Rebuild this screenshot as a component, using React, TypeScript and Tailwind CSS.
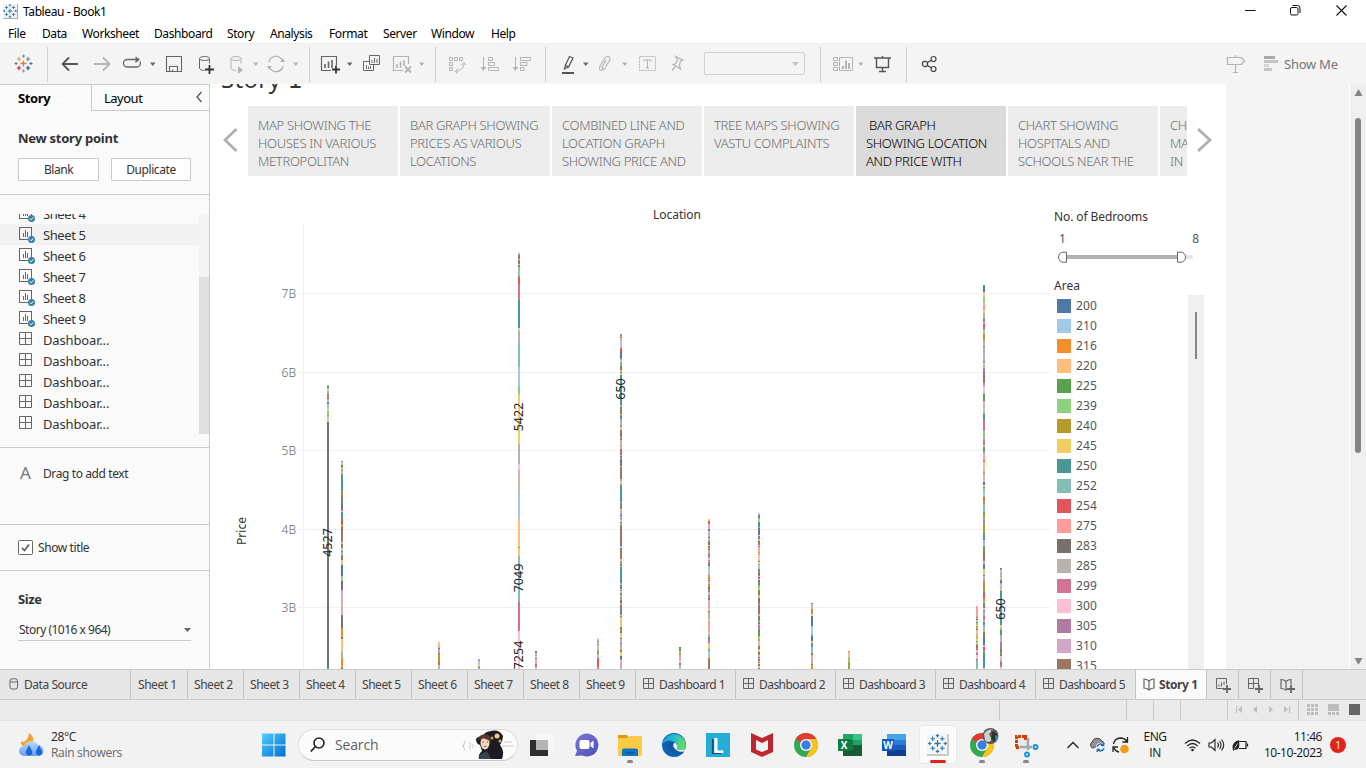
import React from "react";

const PALETTE: Record<string, string> = {
  A: "#4e79a7", B: "#a0cbe8", C: "#f28e2b", D: "#ffbe7d", E: "#59a14f",
  F: "#8cd17d", G: "#b6992d", H: "#f1ce63", I: "#499894", J: "#86bcb6",
  K: "#e15759", L: "#ff9d9a", M: "#79706e", N: "#bab0ac", O: "#d37295",
  P: "#fabfd2", Q: "#b07aa1", R: "#d4a6c8", S: "#9d7660", T: "#d7b5a6",
};

// Stacked bars: x, top, then colour/height pairs from the top down.
const BARS: [number, number, string][] = [
  [327, 385, "T1E2N1B3N1C2E1O2M1T3I2B5H2F4G1B2D4M244E1A1E1"],
  [341, 461, "O1B1D2M2F3G1L1T2I17G1S1G2S6I3M5K2P1I6K4M2C3M2S13T2S4B3S1J2P1S5D4F1A11F5M9R12T10L3I2M11C9A1S1D13N6C10I1"],
  [438, 642, "D4L2K1J3L1K1G1G8K2T2N2"],
  [478, 659, "N1O1B3H2T1S1N1"],
  [518, 253, "N2S4D1S4D1I2F4N1F4Q2K6O15C1I28P2T1F2N9J25B19F8H50N20P6T23B26D28G1H8J46O29P38"],
  [535, 651, "S1K1F1J2P2A1P1L4Q3T2"],
  [597, 638, "P2R1G1T2Q1B5F1G2S1B4K9N1O1"],
  [620, 334, "Q2N1K1D1N2P1B4L2G1K3A6E1T4E1J2S4T2E1H2I30N2S7D1I4N6Q2D3I1S5I1N1S2N6C1D1T1E1K2S3N1I1S1N1M4S1M2H1S12T1N1B1D2J1S2I15N1S6D1N4Q3P1S1B2D1I1F1N1O1S18I1M1N1P1S11D2N1E1J1S2F1I16N2S2A2D1I1P2I2N3S1J1E1M2N2S5I3A1O1P1K1R1D1H8I1S1K1C1I2D5I1N4S1N6S2H4A3O1P1R9"],
  [679, 647, "A1E3R2G2L3T3P2S1K1P1N1B2"],
  [708, 519, "H2K3R2T3A1I1L3T3A1B2C2A3H1S2C1M1N3Q3K1T2P1Q1R1S4B9C3E1T1K1N3G3M2Q2E1R1T2Q2R1A1I1T1L4T1R2D3A1N7D2L9T2D2N3I2O4R1H4F2I1B2T1B2H1N1G1S10I2"],
  [758, 513, "T1P1A1I2J1T1F1H1I5F1M1E1M5P1I1O1K1P1N1E2K2P1K1T5C1H1C1P4D1L1G1P2C1D1B3I2O2M2G1L1K2P1A2O1E2C1F3H1E2S3H1F1D1K1M2S3J1S8K1N1L1S3I2T1S2L1O5I1E5F2H1C2T1P1R3E2M1D1H2A2C1T2S1L1S2P1S1P1S2D2I1"],
  [811, 603, "E1R5G5P2A10B8J2A5D2I4J6S2L5N4S1C4"],
  [848, 651, "Q1D5F5G7"],
  [976, 606, "L11S1P1A1H2I1F2D1G1C1R1A1H3T4C1H3I1D1F2K3O1S1P2J1O2P4K1J12"],
  [983, 285, "E1A6D5F6T1L4O1H3T1N5C1I2T1K1P1K3Q3P1F3G6N5D1I1N14A1B4C1D1Q4S3I1K3S4N1J1O1P7T1E7T7D1B4C1I5O12B1F6T1Q6B1D1E5J1L7S1C1D9J2S1D1T7A3D2E1J3B5C1Q1S2G4J8E1G5J2Q2S1F1G9I7B2O1B3E2S13T3A5D6I1N5S1C1G8I1S1K3S2C4N1I3K2P2Q2R1L1J2O4T1N1I3J3N4S6A7R1P1K3O1C1I2E1I12S1D6"],
  [1000, 568, "M1J2P1N5D1R2O1A2J1T4N1D1N1I34D2H1F2I5N7Q7S4G1E1I1P2L1H1N2S1E1Q3P2S1D6"],
];

function segments(top: number, spec: string) {
  let y = top;
  return Array.from(spec.matchAll(/([A-T])(\d+)/g)).map((m) => {
    const h = Number(m[2]);
    const seg = { y, h: Math.max(0, Math.min(h, 669 - y)), fill: PALETTE[m[1]] };
    y += h;
    return seg;
  });
}

const GRID: [string, number][] = [["7B", 293], ["6B", 372], ["5B", 450], ["4B", 529], ["3B", 607]];
const MARKS: [string, number, number][] = [
  ["4527", 326.5, 542.5], ["5422", 517.5, 417], ["7049", 517.5, 578],
  ["7254", 517.5, 655], ["650", 619.5, 389], ["650", 999.5, 609],
];

function Chart() {
  return (
    <svg width="840" height="493" viewBox="210 176 840 493" className="block shrink-0 font-['Noto_Sans',sans-serif]" shapeRendering="crispEdges">
      <text x="677" y="219" textAnchor="middle" fontSize="12" fill="#333" textLength="48">Location</text>
      <text transform="translate(246 531) rotate(-90)" textAnchor="middle" fontSize="12" fill="#333" textLength="28">Price</text>
      <path d="M303.5 224V669" stroke="#f0f0f0" />
      {GRID.map(([label, y]) => (
        <g key={label}>
          <path d={`M298 ${y + 0.5}H1050`} stroke="#f0f0f0" />
          <text x="296" y={y + 5} textAnchor="end" fontSize="12" fill="#666" fontWeight="300">{label}</text>
        </g>
      ))}
      {BARS.map(([x, top, spec]) =>
        segments(top, spec).map((s, i) => <rect key={`${x}-${i}`} x={x} y={s.y} width="2" height={s.h} fill={s.fill} />)
      )}
      {MARKS.map(([t, x, y], i) => (
        <text key={i} transform={`translate(${x + 5} ${y}) rotate(-90)`} textAnchor="middle" fontSize="12.5" fill="#222">{t}</text>
      ))}
    </svg>
  );
}

type IcoProps = { w: number; h?: number; className?: string; children: React.ReactNode; c?: string };
function Ico({ w, h = 20, className = "", children, c = "#666" }: IcoProps) {
  return (
    <svg width={w} height={h} viewBox={`0 0 ${w} ${h}`} fill="none" stroke={c} className={`block shrink-0 overflow-visible ${className}`}>
      {children}
    </svg>
  );
}
function Caret({ className, c = "#666" }: { className: string; c?: string }) {
  return <Ico w={6} className={className} c={c}><path d="M0 8.500h5.500l-2.750 3.500z" fill={c} stroke="none" /></Ico>;
}
function Sep({ className }: { className: string }) {
  return <div className={`-mt-[7px] h-[35px] w-px shrink-0 bg-[#cfcfcf] ${className}`} />;
}

function TableauMark({ mono = false }: { mono?: boolean }) {
  const m = "#2d78a8";
  const p = (x: number, y: number, r: number) => `M${x - r} ${y}h${2 * r}M${x} ${y - r}v${2 * r}`;
  const k = (c: string) => (mono ? m : c);
  return (
    <g fill="none" strokeWidth="1.1">
      <path d={p(9, 9, 3)} stroke={k("#e8762d")} strokeWidth="1.3" />
      <path d={p(4.5, 4.5, 2.2)} stroke={k("#eb9c3c")} />
      <path d={p(13.5, 4.5, 2.2)} stroke={k("#5b879b")} />
      <path d={p(4.5, 13.5, 2.2)} stroke={k("#c72035")} />
      <path d={p(13.5, 13.5, 2.2)} stroke={k("#1f447e")} />
      <path d={p(9, 1.6, 1.6)} stroke={k("#7099a6")} />
      <path d={p(9, 16.4, 1.6)} stroke={k("#8a9cc4")} />
      <path d={p(1.6, 9, 1.6)} stroke={k("#59879b")} />
      <path d={p(16.4, 9, 1.6)} stroke={k("#5b6591")} />
    </g>
  );
}

function TitleBar() {
  return (
    <div className="flex h-[22px] shrink-0 items-center">
      <div className="ml-[3px] flex h-[15px] w-[15px] items-center justify-center border-r border-b border-[#aaa] bg-[#f4f4f4]">
        <svg width="14" height="14" viewBox="0 0 18 18"><TableauMark mono /></svg>
      </div>
      <span className="ml-[5px] pt-px text-[12px] leading-[22px] tracking-[-0.4px] text-black">Tableau - Book1</span>
      <div className="ml-auto flex items-center">
        <Ico w={11} h={20} c="#111" className="mr-[34px]"><path d="M0 9.500h10.500" /></Ico>
        <Ico w={11} h={20} c="#111" className="mr-[35px]">
          <rect x=".5" y="6.500" width="7.500" height="7.500" rx="1.500" /><path d="M2.500 4.500h5q2.500 0 2.500 2.500v5" />
        </Ico>
        <Ico w={11} h={20} c="#111" className="mr-[19px]"><path d="M.5 4.500l10 10M10.500 4.500l-10 10" strokeWidth="1.100" /></Ico>
      </div>
    </div>
  );
}

function MenuBar() {
  const items: [string, string][] = [
    ["File", "w-[34px]"], ["Data", "w-[40px]"], ["Worksheet", "w-[72px]"], ["Dashboard", "w-[73px]"],
    ["Story", "w-[43px]"], ["Analysis", "w-[59px]"], ["Format", "w-[54px]"], ["Server", "w-[48px]"],
    ["Window", "w-[60px]"], ["Help", "w-[40px]"],
  ];
  return (
    <div className="flex h-[21px] shrink-0 items-center pt-[3px] pl-[8px] text-[12px] tracking-[-0.4px] text-black">
      {items.map(([t, w]) => <span key={t} className={`shrink-0 ${w}`}>{t}</span>)}
    </div>
  );
}

function Toolbar() {
  const g = "#b4b4b4";
  return (
    <div className="flex h-[41px] shrink-0 items-start border-t border-[#ececec] bg-[#f4f4f4] pt-[10px]">
      <Ico w={18} className="ml-[15px]"><g transform="translate(-.5 .5)"><TableauMark /></g></Ico>
      <Sep className="ml-[14px]" />
      <Ico w={18} className="ml-[13px]" c="#555"><path d="M17 10H2M8 3.500L1.500 10 8 16.500" strokeWidth="1.800" /></Ico>
      <Ico w={18} className="ml-[14px]" c={g}><path d="M1 10h15M10 3.500l6.500 6.500-6.500 6.500" strokeWidth="1.800" /></Ico>
      <Ico w={19} className="ml-[12px]"><path d="M15 5.500H4.500a4 3.700 0 0 0 0 7.500h9.500a4 3.700 0 0 0 3-5.500" strokeWidth="1.300" /><path d="M12.500 2.500l4.500 3-4.500 3.500z" fill="#666" stroke="none" /></Ico>
      <Caret className="ml-[8px]" />
      <Ico w={16} className="ml-[10px]"><path d="M.5 2.500h15v15H.5zM3.500 17.500v-5h8v5M6.500 17.500v-2" strokeWidth="1.100" /></Ico>
      <Ico w={16} className="ml-[16px]">
        <ellipse cx="6.500" cy="4.500" rx="5" ry="2" /><path d="M1.500 4.500v10q1 2 5 2M11.500 4.500v5" /><path d="M11.500 11v9M7 15.500h9" stroke="#333" strokeWidth="1.800" />
      </Ico>
      <Ico w={14} className="ml-[16px]" c={g}>
        <ellipse cx="6" cy="4.500" rx="5" ry="2" /><path d="M1 4.500v10q1 2 5 2M11 4.500v5" /><path d="M8 12l5 4-5 4z" fill={g} stroke="none" />
      </Ico>
      <Caret className="ml-[9px]" c={g} />
      <Ico w={18} className="ml-[8px]" c={g}><path d="M2 8a7 7 0 0 1 13-2M16 12a7 7 0 0 1-13 2" strokeWidth="1.300" /><path d="M13 8h5l-2-4zM0 12h5l-3 4z" fill={g} stroke="none" /></Ico>
      <Caret className="ml-[8px]" c={g} />
      <Sep className="ml-[10px]" />
      <Ico w={22} className="ml-[10px]">
        <path d="M11 16.500H1.500v-14h15V11" strokeWidth="1.200" /><path d="M5 14v-4M8.500 14V7.500M12 14V6" strokeWidth="1.600" /><path d="M16 11.500v8M12 15.500h8" stroke="#333" strokeWidth="1.800" />
      </Ico>
      <Caret className="ml-[5px]" />
      <Ico w={18} className="ml-[10px]"><path d="M6.500 1.500h10v9h-10zM6 7.500H.5v9h10V11M9 9V6M11.500 9V4M14 9V5M3.500 15v-4M5.500 15v-2.500M7.500 15v-3" /></Ico>
      <Ico w={22} className="ml-[11px]" c={g}>
        <path d="M11 16.500H1.500v-14h15V10" strokeWidth="1.200" /><path d="M5 14v-4M8.500 14V7.500M12 12V6" strokeWidth="1.600" /><path d="M13 12.500l6 6M19 12.500l-6 6" strokeWidth="1.800" />
      </Ico>
      <Caret className="ml-[5px]" c={g} />
      <Sep className="ml-[10px]" />
      <Ico w={20} className="ml-[12px]" c={g}>
        <path d="M1.500 3.500h3v3h-3zM6.500 3.500h3v3h-3zM11.500 3.500h3v3h-3zM1.500 8.500h3v3h-3zM1.500 13.500h3v3h-3zM16 9.500q0 6-8 8" strokeWidth="1" /><path d="M13 11.500l3-3 2 2.500M10 14.500l-3 3 3 2" />
      </Ico>
      <Ico w={20} className="ml-[12px]" c={g}>
        <path d="M3.500 3v13M8.500 3.500h4v3h-4zM8.500 8.500h6v3h-6zM8.500 13.500h10v3h-10z" /><path d="M.5 13h6l-3 4z" fill={g} stroke="none" />
      </Ico>
      <Ico w={20} className="ml-[12px]" c={g}>
        <path d="M3.500 3v13M8.500 3.500h10v3h-10zM8.500 8.500h6.500v3H8.500zM8.500 13.500h3.500v3H8.500z" /><path d="M.5 13h6l-3 4z" fill={g} stroke="none" />
      </Ico>
      <Sep className="ml-[13px]" />
      <Ico w={15} className="ml-[15px]"><path d="M1 19h12" strokeWidth="2" stroke="#555" /><path d="M4.500 11L8.500 2.500l3.500 1.500-4.500 9zM4.500 11l-1 4 4-2" strokeWidth="1.200" stroke="#555" /></Ico>
      <Caret className="ml-[7px]" />
      <Ico w={14} className="ml-[9px]" c={g}><path d="M8 6l-4 7q0 2.500 2.500 1.500l5-8q1.500-4-2-4-1.500 0-2.500 1.500l-5 8q-1.500 4 1.500 4.500 1.500 0 3-2" strokeWidth="1.200" /></Ico>
      <Caret className="ml-[10px]" c={g} />
      <Ico w={18} className="ml-[11px]" c={g}><rect x=".5" y="2.500" width="16" height="14" strokeDasharray="2 1" /><path d="M5 7.500V6h7v1.500M8.500 6v8M7 14h3" /></Ico>
      <Ico w={14} className="ml-[13px]" c={g}><path d="M5.500 2.500l7.500 3.500-2.500 1-1 4 1 4-3.500-2.500-4-2 3-1 1.500-4zM5.500 12.500L2 16.500" strokeWidth="1.200" /></Ico>
      <div className="mt-[-2px] ml-[20px] flex h-[23px] w-[101px] shrink-0 items-center justify-end rounded-[2px] border border-[#d0d0d0] pr-[5px]">
        <Ico w={7} h={4} c="none"><path d="M0 0h7L3.500 4z" fill="#c4c4c4" /></Ico>
      </div>
      <Sep className="ml-[15px]" />
      <Ico w={21} className="ml-[12px]" c={g}>
        <path d="M.5 3.500h4v3h-4zM.5 8.500h4v3h-4zM.5 13.500h4v3h-4zM6.500 3.500h13v13h-13z" /><path d="M10 15v-3M13 15V6.500M16 15V9" strokeWidth="2" />
      </Ico>
      <Caret className="ml-[4px]" c={g} />
      <Ico w={18} className="ml-[10px]" c="#555"><path d="M0 4h17M8.500 2v2M2.500 4v9.500h12V4M8.500 13.500v4M5 17.500h7" strokeWidth="1.400" /></Ico>
      <Sep className="ml-[14px]" />
      <Ico w={15} className="ml-[15px]" c="#444"><circle cx="3" cy="10" r="2.600" strokeWidth="1.200" /><circle cx="11.500" cy="5" r="2.500" strokeWidth="1.200" /><circle cx="11.500" cy="15" r="2.500" strokeWidth="1.200" /><path d="M5.500 8.500l3.500-2M5.500 11.500l3.500 2" strokeWidth="1.300" /></Ico>
      <Ico w={20} className="ml-[289px]" c={g}><path d="M1.500 3.500h14l3 3.500-3 3.500h-14zM9.500 1v2.500M9.500 10.500v8M7 18.500h5" strokeWidth="1.200" /></Ico>
      <Ico w={14} className="ml-[18px]" c={g}><path d="M0 3.500h11" strokeWidth="3" stroke="#a9a9a9" /><path d="M0 7.500h14M0 15.500h8" strokeWidth="3" stroke="#c4c4c4" /><path d="M0 11.500h5" strokeWidth="3" stroke="#d4d4d4" /></Ico>
      <span className="ml-[6px] text-[13px] leading-[21px] tracking-[-0.25px] whitespace-nowrap text-[#757575]">Show Me</span>
    </div>
  );
}

function SheetIcon() {
  return (
    <Ico w={17} h={17}>
      <rect x=".5" y=".5" width="12" height="12" /><path d="M4.500 10V6M6.500 10V3M8.500 10V5" />
      <circle cx="12.500" cy="12.500" r="3.500" fill="#3a7fa5" stroke="none" /><path d="M10.800 12.500l1.300 1.300 2.200-2.500" stroke="#fff" />
    </Ico>
  );
}
function GridIcon({ s = 13 }: { s?: number }) {
  const e = s - 0.5, m = Math.floor(s / 2) + 0.5;
  return <Ico w={s} h={s}><path d={`M.5 .5H${e}V${e}H.5zM${m} .5V${e}M.5 ${m}H${e}`} /></Ico>;
}

function Sidebar() {
  const rows = ["Sheet 4", "Sheet 5", "Sheet 6", "Sheet 7", "Sheet 8", "Sheet 9", "Dashboar...", "Dashboar...", "Dashboar...", "Dashboar...", "Dashboar..."];
  return (
    <aside className="flex h-[585px] w-[210px] shrink-0 flex-col border-t border-r border-[#cacaca] bg-[#fafafa] text-[#333]">
      <div className="flex h-[26px] shrink-0">
        <div className="w-[91px] shrink-0 pl-[18px] text-[13px] leading-[27px] font-bold tracking-[-0.4px] text-black">Story</div>
        <div className="flex flex-1 justify-between border-b border-l border-[#cacaca] pl-[12px] text-[13px] leading-[27px] tracking-[-0.5px] text-black">
          Layout
          <Ico w={7} h={12} className="mt-[6px] mr-[6px]" c="#555"><path d="M5.500 1L1 6l4.500 5" strokeWidth="1.300" /></Ico>
        </div>
      </div>
      <div className="flex h-[84px] shrink-0 flex-col border-b border-[#cacaca] px-[18px] pt-[17px]">
        <div className="text-[13px] leading-[20px] font-bold tracking-[-0.25px] whitespace-nowrap">New story point</div>
        <div className="mt-[10px] flex gap-[12px]">
          <div className="h-[23px] w-[81px] rounded-[1px] border border-[#c9c9c9] bg-white text-center text-[12px] leading-[22px] tracking-[-0.45px]">Blank</div>
          <div className="h-[23px] w-[80px] rounded-[1px] border border-[#c9c9c9] bg-white text-center text-[12px] leading-[22px] tracking-[-0.4px]">Duplicate</div>
        </div>
      </div>
      <div className="flex h-[253px] shrink-0 border-b border-[#cacaca] pt-[19px]">
        <div className="h-[220px] w-[199px] overflow-hidden">
          <div className="-mt-[11px]">
            {rows.map((r, i) => (
              <div key={i} className={`flex h-[21px] items-start pl-[19px] ${i === 1 ? "bg-[#f2f2f2]" : ""}`}>
                <div className="w-[24px] shrink-0 pt-[3px]">{i < 6 ? <SheetIcon /> : <GridIcon />}</div>
                <span className={`text-[13px] leading-[23px] ${i < 6 ? "tracking-[-0.4px]" : "tracking-[-0.15px]"}`}>{r}</span>
              </div>
            ))}
          </div>
        </div>
        <div className="h-[220px] w-[10px] bg-[#f4f4f4] pt-[63px]"><div className="h-[157px] bg-[#e0e0e0]" /></div>
      </div>
      <div className="flex h-[77px] shrink-0 border-b border-[#cacaca] pl-[20px] pt-[16px]">
        <span className="w-[23px] text-[17px] leading-[18px] text-[#777]">A</span>
        <span className="text-[12px] leading-[20px] tracking-[-0.4px]">Drag to add text</span>
      </div>
      <div className="flex h-[46px] shrink-0 items-center border-b border-[#cacaca] pl-[18px]">
        <Ico w={15} h={15}><rect x=".5" y=".5" width="14" height="14" rx="1" fill="#fff" /><path d="M4 8l2.500 2.500L11 4.500" strokeWidth="1.800" /></Ico>
        <span className="ml-[5px] text-[12px] tracking-[-0.4px]">Show title</span>
      </div>
      <div className="px-[18px] pt-[18px]">
        <div className="text-[13px] leading-[20px] font-bold tracking-[-0.4px]">Size</div>
        <div className="mt-[11px] flex h-[21px] items-center justify-between border-b border-[#c9c9c9] pl-px text-[12px] tracking-[-0.5px]">
          Story (1016 x 964)
          <Ico w={7} h={4} c="none"><path d="M0 0h7L3.500 4z" fill="#666" /></Ico>
        </div>
      </div>
    </aside>
  );
}

const POINTS: string[][] = [
  ["MAP SHOWING THE", "HOUSES IN VARIOUS", "METROPOLITAN"],
  ["BAR GRAPH SHOWING", "PRICES AS VARIOUS", "LOCATIONS"],
  ["COMBINED LINE AND", "LOCATION GRAPH", "SHOWING PRICE AND"],
  ["TREE MAPS SHOWING", "VASTU COMPLAINTS"],
  ["\u00a0BAR GRAPH", "SHOWING LOCATION", "AND PRICE WITH"],
  ["CHART SHOWING", "HOSPITALS AND", "SCHOOLS NEAR THE"],
  ["CHART", "MAP", "IN"],
];

const LEGEND: [string, string][] = [
  ["200", "A"], ["210", "B"], ["216", "C"], ["220", "D"], ["225", "E"], ["239", "F"], ["240", "G"],
  ["245", "H"], ["250", "I"], ["252", "J"], ["254", "K"], ["275", "L"], ["283", "M"], ["285", "N"],
  ["299", "O"], ["300", "P"], ["305", "Q"], ["310", "R"], ["315", "S"],
];

function Story() {
  return (
    <section className="flex h-[585px] w-[1016px] shrink-0 flex-col overflow-hidden bg-white">
      <div className="flex h-[22px] shrink-0 items-start overflow-hidden pl-[11px]">
        <span className="-mt-[22px] text-[24px] leading-[34px] tracking-[0.3px] whitespace-nowrap text-[#333]">Story <span className="font-['DejaVu_Sans']">1</span></span>
      </div>
      <div className="flex h-[70px] shrink-0">
        <div className="flex w-[38px] items-center pl-[12px]"><Ico w={16} h={26} c="#b0b0b0" className="-mt-[2px]"><path d="M14.500 2L3 13l11.500 11" strokeWidth="2.800" /></Ico></div>
        <div className="flex w-[939px] gap-[2px] overflow-hidden">
          {POINTS.map((lines, i) => (
            <div key={i} className={`h-[70px] w-[150px] shrink-0 pt-[10px] pl-[10px] text-[13px] leading-[18px] font-light whitespace-nowrap ${i === 4 ? "bg-[#dadada] tracking-[-0.33px] text-black" : "bg-[#ececec] tracking-[-0.33px] text-[#6f6f6f]"}`}>
              {lines.map((l) => <div key={l}>{l}</div>)}
            </div>
          ))}
        </div>
        <div className="flex items-center pl-[9px]"><Ico w={16} h={26} c="#b0b0b0" className="-mt-[2px]"><path d="M2 2l12 11L2 24" strokeWidth="2.800" /></Ico></div>
      </div>
      <div className="flex h-[493px] shrink-0">
        <Chart />
        <div className="flex w-[154px] shrink-0 flex-col pt-[31px] pl-[4px]">
          <div className="text-[12px] leading-[20px] tracking-[-0.1px] text-[#333] whitespace-nowrap">No. of Bedrooms</div>
          <div className="mt-[2px] flex justify-between pr-[5px] pl-[5px] text-[12px] leading-[20px] text-[#555]"><span>1</span><span>8</span></div>
          <Ico w={140} h={12} className="mt-[2px] ml-[4px]">
            <path d="M120 6h15" stroke="#e6e6e6" strokeWidth="4" /><path d="M8 6h112" stroke="#b3b3b3" strokeWidth="4" />
            <path d="M8.500 1.200v10H5a4.500 5 0 0 1 0-10zM119.500 1.200v10h3.500a4.500 5 0 0 0 0-10z" fill="#fff" />
          </Ico>
          <div className="mt-[12px] text-[12px] leading-[22px] text-[#333]">Area</div>
          <div className="mt-[-2px] flex h-[375px]">
            <div className="w-[134px] overflow-hidden pt-px pl-[3px]">
              {LEGEND.map(([n, c]) => (
                <div key={n} className="flex h-[20px] items-center gap-[5px] text-[12px] tracking-[0.1px] text-[#555]">
                  <span className="h-[14px] w-[14px]" style={{ backgroundColor: PALETTE[c] }} />{n}
                </div>
              ))}
            </div>
            <div className="w-[16px] bg-[#efefef] pt-[17px] pl-[7px]"><div className="h-[47px] w-[2px] bg-[#868686]" /></div>
          </div>
        </div>
      </div>
    </section>
  );
}

function VScroll() {
  return (
    <div className="flex h-[585px] flex-1 justify-end bg-[#f3f3f3]">
      <div className="flex w-[17px] flex-col items-center border-l border-white bg-[#efefef]">
        <Ico w={9} h={8} c="none" className="mt-[5px]"><path d="M.5 7L4 .8q.5-.6 1 0L8.500 7z" fill="#858585" /></Ico>
        <div className="mt-[21px] h-[335px] w-[6px] rounded-full bg-[#858585]" />
        <Ico w={9} h={7} c="none" className="mt-[205px]"><path d="M.5 0L4 6q.5.600 1 0L8.500 0z" fill="#858585" /></Ico>
      </div>
    </div>
  );
}

function Book({ plus = false }: { plus?: boolean }) {
  return (
    <Ico w={16} h={15}>
      <path d={plus ? "M6 4.500q-2-2-5-2v9q3 0 5 1.500zM6 4.500q2-2 5-2v5" : "M6 4q-2-2-5-2v9q3 0 5 2 2-2 5-2V2q-3 0-5 2v9"} strokeWidth="1.200" />
      {plus && <path d="M11 8v8M7 12h8" strokeWidth="1.800" />}
    </Ico>
  );
}

function SheetTabs() {
  const sheets = [2, 3, 4, 5, 6, 7, 8, 9];
  return (
    <div className="flex h-[31px] shrink-0 border-t border-b border-[#cacaca] bg-[#e6e6e6] text-[12px] leading-[30px] tracking-[-0.45px] whitespace-nowrap text-[#444]">
      <div className="flex w-[131px] shrink-0 border-r border-[#c4c4c4] pl-[9px]">
        <Ico w={10} h={12} className="mt-[8px]"><rect x="1" y=".8" width="7.500" height="10.200" rx="2" /><path d="M1 3.500q3.700 1.500 7.500 0" /></Ico>
        <span className="ml-[5px] tracking-[-0.45px]">Data Source</span>
      </div>
      <div className="w-[57px] shrink-0 border-r border-[#c4c4c4] pl-[7px]">Sheet 1</div>
      {sheets.map((n) => <div key={n} className="w-[56px] shrink-0 border-r border-[#c4c4c4] pl-[6px]">Sheet {n}</div>)}
      {[1, 2, 3, 4, 5].map((n) => (
        <div key={n} className="flex w-[100px] shrink-0 border-r border-[#c4c4c4] pl-[7px]">
          <div className="mt-[8px]"><GridIcon s={11} /></div><span className="ml-[5px] tracking-[-0.55px]">Dashboard {n}</span>
        </div>
      ))}
      <div className="flex w-[71px] shrink-0 border-r border-[#c4c4c4] bg-[#fafafa] pl-[7px] font-bold tracking-[-0.4px]">
        <div className="mt-[7px]"><Book /></div>Story 1
      </div>
      <div className="flex w-[32px] shrink-0 border-r border-[#c4c4c4] pt-[8px] pl-[9px]">
        <Ico w={16} h={15}><path d="M7 10.500H.5V.5h10V6M3 8.500v-2M5.500 8.500v-4M8 7V3.500" /><path d="M11 7v8M7 11h8" strokeWidth="1.800" /></Ico>
      </div>
      <div className="flex w-[32px] shrink-0 border-r border-[#c4c4c4] pt-[8px] pl-[9px]">
        <Ico w={16} h={15}><path d="M6 10.500H.5V.5h10V7M.5 5.500h10M5.500 .5v10" /><path d="M11 7v8M7 11h8" strokeWidth="1.800" /></Ico>
      </div>
      <div className="flex w-[32px] shrink-0 border-r border-[#c4c4c4] pt-[7px] pl-[9px]"><Book plus /></div>
    </div>
  );
}

function StatusBar() {
  const c = "#bdbdbd";
  return (
    <div className="flex h-[20px] shrink-0 bg-[#eaeaea]">
      <div className="w-[1000px] border-r border-[#c8c8c8]" />
      <div className="w-[127px] border-r border-[#c8c8c8]" />
      <div className="w-[27px] border-r border-[#c8c8c8]" />
      <div className="w-[27px] border-r border-[#c8c8c8]" />
      <div className="w-[47px] border-r border-[#c8c8c8]" />
      <div className="flex w-[71px] border-r border-[#c8c8c8] pt-[6px] pl-[8px]">
        <Ico w={56} h={8} c="none"><path d="M0 0h1v7H0zM6 0v7L2 3.500zM21 0v7l-4-3.500zM33 0v7l4-3.500zM48 0v7l4-3.500zM53 0h1v7h-1z" fill={c} /></Ico>
      </div>
      <div className="flex pt-[4px] pl-[8px]">
        <Ico w={55} h={12} c="none">
          <path d="M0 0h3v3H0zM4 0h3v3H4zM8 0h3v3H8zM0 4h3v3H0zM4 4h3v3H4zM8 4h3v3H8zM0 8h3v3H0zM4 8h3v3H4zM8 8h3v3H8zM21 0h11v7H21zM21 8h3v3h-3zM25 8h3v3h-3zM29 8h3v3h-3z" fill={c} />
          <path d="M42 0h11v11H42z" fill="#666" />
        </Ico>
      </div>
    </div>
  );
}

function Slot({ children, run }: { children: React.ReactNode; run?: string }) {
  return (
    <div className="relative flex h-[47px] w-[44px] shrink-0 items-center justify-center">
      {children}
      {run && <div className={`absolute bottom-[5px] h-[3px] rounded-full ${run}`} />}
    </div>
  );
}

function Chrome() {
  return (
    <>
      <circle cx="12" cy="12" r="12" fill="#33a852" stroke="none" />
      <path d="M12 12L1.600 6A12 12 0 0 1 22.400 6z" fill="#e33b2e" stroke="none" />
      <path d="M12 6h10.400A12 12 0 0 1 12 24l5.200-9z" fill="#fcc31e" stroke="none" />
      <circle cx="12" cy="12" r="6" fill="#fff" stroke="none" /><circle cx="12" cy="12" r="4.700" fill="#3c7be8" stroke="none" />
    </>
  );
}

function Taskbar() {
  return (
    <div className="flex h-[48px] shrink-0 items-center border-t border-[#e3e3e3] bg-[#f2f2f2] font-['Open_Sans','Noto_Sans',sans-serif]">
      <div className="flex w-[252px] shrink-0 items-center pl-[19px]">
        <Ico w={26} h={26} c="none">
          <defs><linearGradient id="rain" x2="0" y2="1"><stop stopColor="#b9d8fb" /><stop offset="1" stopColor="#6a9df0" /></linearGradient></defs>
          <path d="M10 1q7 4 3 12l-9 1q-3-2-2-4 7 0 8-9z" fill="#f4a32b" />
          <path d="M5 24a5 5 0 0 1 0-10 8 8 0 0 1 14-1 5.500 5.500 0 0 1 0 11z" fill="url(#rain)" />
          <path d="M10 13l3 6q1 4-2.500 4.500Q6 23 7 19zM20 13l3 6q1 4-2.500 4.500Q16 23 17 19z" fill="#1668dd" />
        </Ico>
        <div className="ml-[6px] text-[12px] leading-[16px] tracking-[-0.35px] whitespace-nowrap text-[#222]"><div>28°C</div><div className="tracking-[-0.3px] text-[#666]">Rain showers</div></div>
      </div>
      <Slot>
        <Ico w={24} h={24} c="none">
          <defs><linearGradient id="win" x2="1" y2="1"><stop stopColor="#4fd0fb" /><stop offset="1" stopColor="#006fd0" /></linearGradient></defs>
          <path d="M0 .5h11.500v11H0zM12.500 .5h11v11h-11zM0 12.500h11.500v11H0zM12.500 12.500h11v11h-11z" fill="url(#win)" />
        </Ico>
      </Slot>
      <div className="ml-[2px] flex h-[32px] w-[220px] shrink-0 items-center rounded-full border border-[#dedede] border-b-[#c8c8c8] bg-[#fbfbfb] pl-[11px]">
        <Ico w={16} h={16} c="#222"><circle cx="9" cy="6" r="5" strokeWidth="1.600" /><path d="M5.500 9.500L.8 14.500" strokeWidth="1.800" /></Ico>
        <span className="ml-[9px] text-[14px] tracking-[-0.15px] text-[#5f5f5f]">Search</span>
        <Ico w={54} h={30} c="none" className="ml-auto mr-px">
          <path d="M4 11q-2 0-2 3t-2 2q2 0 2 2t2 3M8 12v8M11 14v4M42 12h8M40 16h12" stroke="#ccc" />
          <path d="M14 9q2-3 7-3 1-4 8-5 8-2 12 5 0 5-3 9 5 6 2 14H17q-1-5 3-8l-2-6q-4-1-4-6z" fill="#1d1b22" />
          <ellipse cx="23" cy="13" rx="4.500" ry="6.500" fill="#f0d2bd" /><path d="M17 25l8-4 4 8H17z" fill="#344254" />
          <path d="M16 10q1-6 8-6 5 1 5 8-6-5-10-3z" fill="#5c3828" /><circle cx="35" cy="6" r="2.500" fill="#e8cd97" /><circle cx="30" cy="8" r="1.500" fill="#c79a57" /><circle cx="38" cy="11" r="1.500" fill="#d5b478" />
          <path d="M20.500 12h1.500M24.500 12h1.500M22 16.500h2.500" stroke="#8a4238" strokeWidth=".8" />
        </Ico>
      </div>
      <div className="w-[2px] shrink-0" />
      <Slot>
        <Ico w={24} h={24} c="none"><path d="M0 7h18v16H0z" fill="#2e2e2e" /><path d="M6 1h18v16H6z" fill="#f7f7f7" /><path d="M6 7h12v10H6z" fill="#b5b5b5" /></Ico>
      </Slot>
      <Slot>
        <Ico w={24} h={24} c="none" className="-ml-px">
          <defs><linearGradient id="chat" y2="1" x2="1"><stop stopColor="#7d77d8" /><stop offset="1" stopColor="#4a50b8" /></linearGradient></defs>
          <path d="M1 23l2-5A11.500 11.500 0 1 1 8 22.500z" fill="url(#chat)" /><rect x="5.500" y="7" width="10" height="9" rx="2" fill="#fff" /><path d="M16.500 10l3-2.500v8l-3-2.500z" fill="#fff" />
        </Ico>
      </Slot>
      <Slot run="w-[6px] bg-[#858585]">
        <Ico w={24} h={24} c="none"><path d="M0 2h9l2 3H0z" fill="#dc9a12" /><path d="M0 5h10l2-2h12v18q0 2-2 2H2q-2 0-2-2z" fill="#fbcb45" /><path d="M4 17q0-1.500 2-1.500h12q2 0 2 1.500v6H4z" fill="#0c74c8" /><path d="M8 19h8v1.500H8z" fill="#0a5a9f" /></Ico>
      </Slot>
      <Slot>
        <Ico w={24} h={24} c="none">
          <defs><linearGradient id="edge" x2="1" y2=".3"><stop stopColor="#178fd6" /><stop offset=".5" stopColor="#24bbd5" /><stop offset="1" stopColor="#5fdb68" /></linearGradient></defs>
          <circle cx="12" cy="12" r="12" fill="#0d62b5" /><path d="M.2 11A12 12 0 0 1 24 12q0 5-5 5-5 0-4-2 1-3-2-6Q6 5 .2 11z" fill="url(#edge)" />
          <path d="M12 10q-3 1-2 5 2 5 8 5 2 0 4-1l-2 2Q9 21 6 15q-1-3 2-6z" fill="#18549b" /><path d="M13 9.500q-3 2-1 5 3 5 10 4 2-3 2-3-3 2-6 1.500-4-.5-3-2.500 1-2-2-5z" fill="#f2f2f2" />
        </Ico>
      </Slot>
      <Slot>
        <div className="flex h-[24px] w-[24px] items-center justify-center bg-[#25add9] font-['Lato',sans-serif] text-[21px] leading-[24px] font-black text-white [text-shadow:-2px_1px_0_#14486b]">L</div>
      </Slot>
      <Slot>
        <Ico w={24} h={24} c="none"><path d="M1 0l11 5L23 0v19l-11 5L1 19z" fill="#bd2730" /><path d="M6 7l6 3 6-3v9.500L12 19l-6-2.500z" fill="#f2f2f2" /></Ico>
      </Slot>
      <Slot><Ico w={24} h={24} c="none"><Chrome /></Ico></Slot>
      <Slot>
        <div className="relative flex h-[22px] w-[24px] items-center">
          <Ico w={24} h={22} c="none"><path d="M5 0h10v6H5z" fill="#21a366" /><path d="M15 0h9v6h-9z" fill="#33c481" /><path d="M5 6h10v10H5z" fill="#107c41" /><path d="M15 6h9v5h-9z" fill="#21a366" /><path d="M15 11h9v5h-9zM5 16h19v6H5z" fill="#185c37" /></Ico>
          <span className="absolute top-[5px] left-0 h-[12px] w-[12px] bg-[#107c41] text-center text-[10px] leading-[12px] font-bold text-white">X</span>
        </div>
      </Slot>
      <Slot>
        <div className="relative flex h-[22px] w-[24px] items-center">
          <Ico w={24} h={22} c="none"><path d="M5 0h19v6H5z" fill="#41a5ee" /><path d="M5 6h19v5H5z" fill="#2b7cd3" /><path d="M5 11h19v5H5z" fill="#185abd" /><path d="M5 16h19v6H5z" fill="#103f91" /></Ico>
          <span className="absolute top-[5px] left-0 h-[12px] w-[12px] bg-[#185abd] text-center text-[10px] leading-[12px] font-bold text-white">W</span>
        </div>
      </Slot>
      <Slot run="w-[16px] bg-[#e0231b]">
        <div className="flex h-[39px] w-[38px] shrink-0 items-center justify-center rounded-[4px] border border-[#e8e8e8] bg-[#fbfbfb]">
          <div className="flex h-[22px] w-[22px] items-center justify-center border-r-2 border-b-2 border-[#c9c9c9] bg-[#f5f5f5]"><svg width="19" height="19" viewBox="0 0 18 18"><TableauMark mono /></svg></div>
        </div>
      </Slot>
      <Slot run="w-[6px] bg-[#858585]">
        <Ico w={24} h={24} c="none"><Chrome /><circle cx="20.500" cy="3" r="8" fill="#5b5a52" /><path d="M14 1q4-6 9-4l-4 4 3 6q-5 4-7 0z" fill="#cbd3cd" /><path d="M21-3l6 4-2 7-4-1 1-5z" fill="#2e3134" /><path d="M25 2l3 2-2 5z" fill="#2f9ab0" /></Ico>
      </Slot>
      <Slot run="w-[6px] bg-[#858585]">
        <Ico w={24} h={24} c="none"><path d="M1 2h14v15H1z" fill="#e9e9e9" /><path d="M2.500 14V3.500H13" stroke="#d83b01" strokeWidth="3" strokeDasharray="3 1" fill="none" /><path d="M2 14.500h3M11.500 2v5" stroke="#d83b01" strokeWidth="3" /><path d="M14 5v12M6 14h12" stroke="#a2a7ab" strokeWidth="2.500" /><circle cx="21.500" cy="14" r="2" stroke="#1490df" strokeWidth="1.800" /><circle cx="13" cy="21.500" r="2" stroke="#1490df" strokeWidth="1.800" /></Ico>
      </Slot>
      <Ico w={12} h={8} c="#222" className="ml-[19px]"><path d="M.5 7L6 1.500 11.500 7" strokeWidth="1.300" /></Ico>
      <Ico w={17} h={16} c="none" className="ml-[10px]">
        <path d="M3.500 11A3.500 3.500 0 0 1 3 5a5.500 5.500 0 0 1 10-1 3 3 0 0 1 2 3z" fill="#929292" stroke="#444" /><circle cx="11.500" cy="10.500" r="4.800" fill="#f2f2f2" /><path d="M7.800 9.500q3-4 6.500-1.500M14.700 6v2.500H12M15.200 11.500q-3 4-6.500 1.500M8.300 15v-2.500H11" stroke="#1671c5" strokeWidth="1.400" />
      </Ico>
      <Ico w={18} h={18} c="#222" className="ml-[6px]"><path d="M1.500 8q1-5.500 7-6 4 0 6.500 3.500M15.500 1v5h-5M1 16v-5h5M2 12q1.500 3.500 5 4" strokeWidth="1.300" /><circle cx="12.500" cy="13" r="4.300" fill="#f59b0e" stroke="none" /></Ico>
      <div className="ml-[11px] w-[28px] shrink-0 text-center text-[12px] leading-[16px] tracking-[-0.4px] text-[#111]">ENG<br />IN</div>
      <Ico w={17} h={14} c="#222" className="ml-[15px]"><path d="M1 5.500q7.500-7 15 0M3.300 8q5.200-5 10.400 0M5.600 10.300q2.900-2.800 5.800 0" strokeWidth="1.200" /><circle cx="8.500" cy="12" r="1.300" fill="#222" stroke="none" /></Ico>
      <Ico w={17} h={14} c="#222" className="ml-[7px]"><path d="M1 5h2.500L7 1.500v11L3.500 9H1zM9.500 4.500q2 2.500 0 5M11.500 3q3 4 0 8M13.500 1.500q4.500 5.500 0 11" strokeWidth="1.100" /></Ico>
      <Ico w={17} h={14} c="#222" className="ml-[7px]"><path d="M6.500 3.500h7.500v7H7M15.500 5.500v3" strokeWidth="1.200" /><path d="M.5 8.500Q1 4 6.500 2q1.500 4 .5 7.500-1.500 3-4.500 2L1 13z" fill="#222" stroke="none" /><path d="M2.500 10.500l3-5" stroke="#f2f2f2" strokeWidth=".8" /></Ico>
      <div className="ml-auto shrink-0 text-right text-[12px] leading-[16px] tracking-[-0.45px] text-[#111]">11:46<br />10-10-2023</div>
      <div className="mr-[20px] ml-[8px] h-[16px] w-[16px] shrink-0 rounded-full bg-[#e0231b] text-center text-[10px] leading-[16px] text-white">1</div>
    </div>
  );
}

export default function App() {
  return (
    <div className="flex h-[768px] w-[1366px] flex-col overflow-hidden bg-white font-['Noto_Sans',sans-serif]">
      <TitleBar />
      <MenuBar />
      <Toolbar />
      <div className="flex h-[585px] shrink-0">
        <Sidebar />
        <Story />
        <VScroll />
      </div>
      <SheetTabs />
      <StatusBar />
      <Taskbar />
    </div>
  );
}
